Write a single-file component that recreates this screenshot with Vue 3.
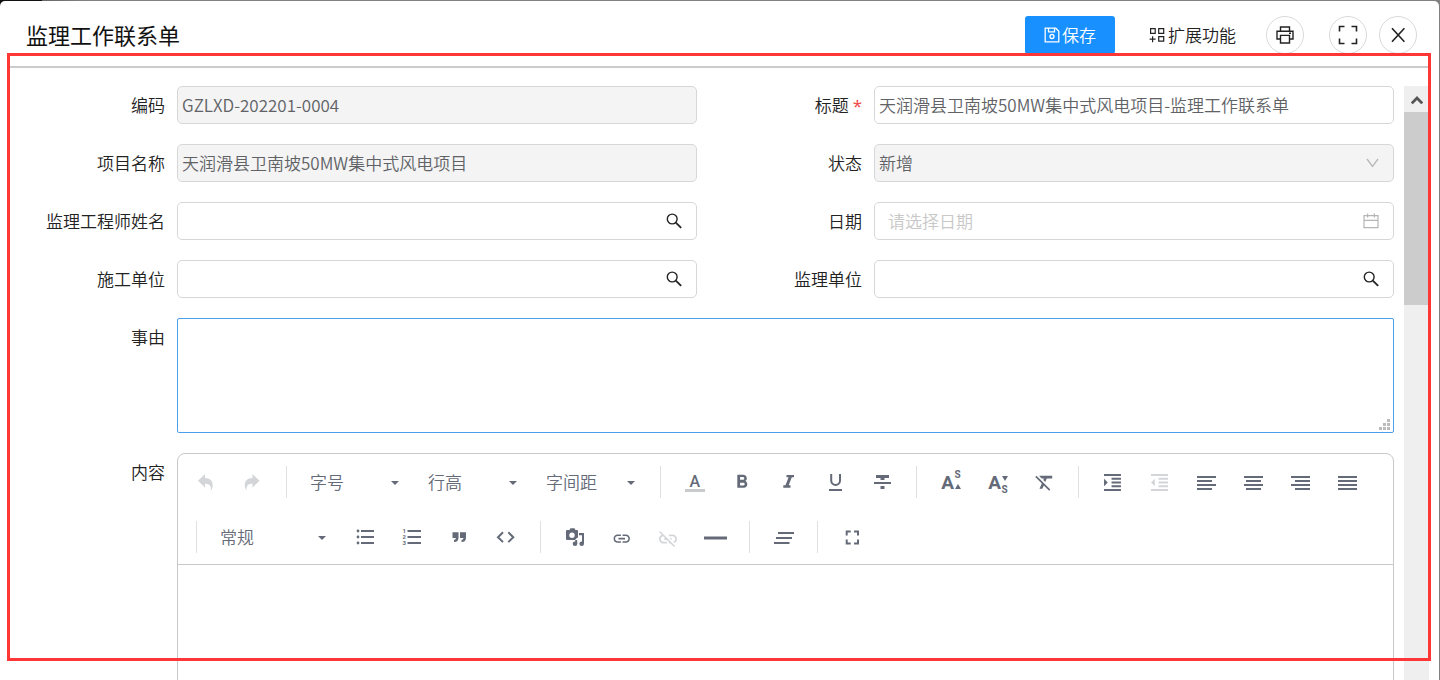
<script setup>
import { ref } from 'vue'

const code = ref('GZLXD-202201-0004')
const title = ref('天润滑县卫南坡50MW集中式风电项目-监理工作联系单')
const project = ref('天润滑县卫南坡50MW集中式风电项目')
const engineer = ref('')
const date = ref('')
const builder = ref('')
const supervisor = ref('')
const reason = ref('')

const alignIcons = [
  { name: '左对齐', d: 'M3 8h19M3 12h15M3 16h19M3 20h15' },
  { name: '居中对齐', d: 'M3 8h19M5 12h15M3 16h19M5 20h15' },
  { name: '右对齐', d: 'M3 8h19M7 12h15M3 16h19M7 20h15' },
  { name: '两端对齐', d: 'M3 8h19M3 12h19M3 16h19M3 20h19' },
]
</script>

<template>
  <div class="page">
    <main class="dialog">
      <header class="header">
        <h1>监理工作联系单</h1>
        <div class="actions">
          <button class="save" type="button">
            <svg width="16" height="16" viewBox="0 0 16 16" fill="none" stroke="currentColor" stroke-width="1.3">
              <path d="M1.2 1.2h10.6l3 3v10.6H1.2zM4.5 1.2v3.6h6V1.2" />
              <circle cx="8" cy="9.5" r="2" />
            </svg>
            保存
          </button>
          <button class="extend" type="button">
            <svg width="17" height="16" viewBox="0 0 17 16" fill="none" stroke="currentColor" stroke-width="1.2">
              <path d="M1.600 1.700h4.600v4.600H1.600zM9.700 1.700h5v4.600h-5zM9.700 9.600h5v4.600h-5zM.6 12.200h6M3.600 9.200v6" />
            </svg>
            扩展功能
          </button>
          <button class="round print" type="button" aria-label="打印">
            <svg width="20" height="20" viewBox="0 0 20 20" fill="none" stroke="currentColor" stroke-width="1.400">
              <path d="M5.500 6V2h9v4M5.500 14H2V6.200h16V14h-3.500M5.500 10.400h9V18h-9zM14 8.300h2" />
            </svg>
          </button>
          <button class="round full" type="button" aria-label="全屏">
            <svg width="20" height="20" viewBox="0 0 20 20" fill="none" stroke="currentColor" stroke-width="1.600">
              <path d="M1.500 6.500v-5h5M13.500 1.500h5v5M18.500 13.500v5h-5M6.500 18.500h-5v-5" />
            </svg>
          </button>
          <button class="round" type="button" aria-label="关闭">
            <svg width="16" height="16" viewBox="0 0 16 16" fill="none" stroke="currentColor" stroke-width="1.600">
              <path d="M2 1.200l12.400 13.600M14.400 1.200L2 14.800" />
            </svg>
          </button>
        </div>
      </header>
      <div class="rule"></div>

      <div class="body">
        <form class="form" @submit.prevent>
          <div class="field">
            <label for="code">编码</label>
            <div class="box off"><input id="code" v-model="code" disabled /></div>
          </div>
          <div class="field">
            <label for="title">标题 <span class="star">*</span></label>
            <div class="box"><input id="title" v-model="title" /></div>
          </div>
          <div class="field">
            <label for="project">项目名称</label>
            <div class="box off"><input id="project" v-model="project" disabled /></div>
          </div>
          <div class="field">
            <label for="status">状态</label>
            <div class="box off">
              <select id="status" disabled><option>新增</option></select>
              <svg class="suffix" width="13" height="10" viewBox="0 0 13 10" fill="none" stroke="#b8b8b8" stroke-width="1.3">
                <path d="M1 1l5.5 7.4L12 1" />
              </svg>
            </div>
          </div>
          <div class="field">
            <label for="engineer">监理工程师姓名</label>
            <div class="box">
              <input id="engineer" v-model="engineer" />
              <button class="find" type="button" aria-label="查找监理工程师">
                <svg width="16" height="16" viewBox="0 0 16 16" fill="none" stroke="currentColor">
                  <circle cx="6.2" cy="6" r="4.9" stroke-width="1.4" /><path d="M9.8 9.6l5.4 5.2" stroke-width="1.8" />
                </svg>
              </button>
            </div>
          </div>
          <div class="field">
            <label for="date">日期</label>
            <div class="box">
              <input id="date" v-model="date" class="date" placeholder="请选择日期" />
              <svg class="suffix" width="16" height="16" viewBox="0 0 16 16" fill="none" stroke="#b5b5b5" stroke-width="1.2">
                <path d="M1 2.6h14v12H1zM1 7.4h14M4.6 .6v4M11.4 .6v4" />
              </svg>
            </div>
          </div>
          <div class="field">
            <label for="builder">施工单位</label>
            <div class="box">
              <input id="builder" v-model="builder" />
              <button class="find" type="button" aria-label="查找施工单位">
                <svg width="16" height="16" viewBox="0 0 16 16" fill="none" stroke="currentColor">
                  <circle cx="6.2" cy="6" r="4.9" stroke-width="1.4" /><path d="M9.8 9.6l5.4 5.2" stroke-width="1.8" />
                </svg>
              </button>
            </div>
          </div>
          <div class="field">
            <label for="supervisor">监理单位</label>
            <div class="box">
              <input id="supervisor" v-model="supervisor" />
              <button class="find" type="button" aria-label="查找监理单位">
                <svg width="16" height="16" viewBox="0 0 16 16" fill="none" stroke="currentColor">
                  <circle cx="6.2" cy="6" r="4.9" stroke-width="1.4" /><path d="M9.8 9.6l5.4 5.2" stroke-width="1.8" />
                </svg>
              </button>
            </div>
          </div>

          <div class="field wide">
            <label for="reason">事由</label>
            <div class="area">
              <textarea id="reason" v-model="reason"></textarea>
              <svg class="grip" width="11" height="11" viewBox="0 0 11 11" fill="#bbb">
                <path d="M8 0h3v3H8zM4 4h3v3H4zM8 4h3v3H8zM0 8h3v3H0zM4 8h3v3H4zM8 8h3v3H8z" />
              </svg>
            </div>
          </div>

          <div class="field wide">
            <label for="content">内容</label>
            <div class="editor">
              <div class="toolbar">
                <div class="tools">
                  <button type="button" class="dim" aria-label="撤销">
                    <svg viewBox="0 0 25 25"><path d="M12 5v4c5 0 8 3 7.700 7.500 0 2-.8 3.700-1.900 5.200.8-4.700-1-7-5.800-7v3.800L5 11.800z" /></svg>
                  </button>
                  <button type="button" class="dim" aria-label="重做">
                    <svg viewBox="0 0 25 25"><path transform="translate(24.500) scale(-1 1)" d="M12 5v4c5 0 8 3 7.700 7.500 0 2-.8 3.700-1.900 5.200.8-4.700-1-7-5.800-7v3.800L5 11.800z" /></svg>
                  </button>
                  <i class="sep"></i>
                  <span class="pick"><select aria-label="字号"><option>字号</option></select></span>
                  <span class="pick"><select aria-label="行高"><option>行高</option></select></span>
                  <span class="pick"><select aria-label="字间距"><option>字间距</option></select></span>
                  <i class="sep"></i>
                  <button type="button" aria-label="文字颜色">
                    <svg viewBox="0 0 25 25"><text x="12.900" y="17.500" font-size="16" text-anchor="middle" class="g medium">A</text><path fill="#c8cacd" d="M3 20h20v3H3z" /></svg>
                  </button>
                  <button type="button" aria-label="粗体">
                    <svg viewBox="0 0 25 25"><path transform="translate(1.800 2) scale(.93)" d="M15.600 10.790c.97-.67 1.650-1.770 1.650-2.790 0-2.260-1.750-4-4-4H7v14h7.040c2.090 0 3.710-1.700 3.710-3.790 0-1.520-.86-2.820-2.150-3.420zM10 6.500h3c.83 0 1.500.67 1.500 1.500s-.67 1.500-1.500 1.500h-3v-3zm3.500 9H10v-3h3.500c.83 0 1.500.67 1.500 1.500s-.67 1.500-1.500 1.500z" /></svg>
                  </button>
                  <button type="button" aria-label="斜体">
                    <svg viewBox="0 0 25 25"><path d="M10.500 6H18v2.300h-2.200l-3.100 8h1.800v2.400H7.300v-2.400h2.200l3.100-8h-2.100z" /></svg>
                  </button>
                  <button type="button" aria-label="下划线">
                    <svg viewBox="0 0 25 25"><path class="line" d="M8.200 5v6.500a4.400 4.400 0 0 0 8.800 0V5" /><path d="M6 20h13v2H6z" /></svg>
                  </button>
                  <button type="button" aria-label="删除线">
                    <svg viewBox="0 0 25 25"><path d="M6 6h13v3h-4.500v2h-4V9H6zM4 13h17v2H4zM10.500 17h4v3h-4z" /></svg>
                  </button>
                  <i class="sep"></i>
                  <button type="button" aria-label="上标">
                    <svg viewBox="0 0 25 25"><text x="9.600" y="20" font-size="19" text-anchor="middle" class="g bold">A</text><text x="19.500" y="9" font-size="10" text-anchor="middle" class="g bold">S</text><path d="M17 20l3-5 3 5z" /></svg>
                  </button>
                  <button type="button" aria-label="下标">
                    <svg viewBox="0 0 25 25"><text x="9.600" y="20" font-size="19" text-anchor="middle" class="g bold">A</text><text x="19.500" y="24" font-size="10" text-anchor="middle" class="g bold">S</text><path d="M17 7h6l-3 5z" /></svg>
                  </button>
                  <button type="button" aria-label="清除格式">
                    <svg viewBox="0 0 25 25"><path transform="translate(1.400 2) scale(.94)" d="M3.270 5L2 6.270l6.970 6.970L6.500 19h3l1.570-3.660L16.730 21 18 19.730 3.550 5.270 3.270 5zM6 5v.18L8.820 8h2.400l-.72 1.680 2.100 2.100L14.210 8H20V5H6z" /></svg>
                  </button>
                  <i class="sep"></i>
                  <button type="button" aria-label="增加缩进">
                    <svg viewBox="0 0 25 25"><path transform="translate(1.200 2.200) scale(.94)" d="M3 21h18v-2H3v2zM3 8v8l4-4-4-4zm8 9h10v-2H11v2zM3 3v2h18V3H3zm8 6h10V7H11v2zm0 4h10v-2H11v2z" /></svg>
                  </button>
                  <button type="button" class="dim" aria-label="减少缩进">
                    <svg viewBox="0 0 25 25"><path transform="translate(1.200 2.200) scale(.94)" d="M11 17h10v-2H11v2zm-8-5l4 4V8l-4 4zm0 9h18v-2H3v2zM3 3v2h18V3H3zm8 6h10V7H11v2zm0 4h10v-2H11v2z" /></svg>
                  </button>
                  <button v-for="a in alignIcons" :key="a.name" type="button" :aria-label="a.name">
                    <svg viewBox="0 0 25 25"><path class="line" :d="a.d" /></svg>
                  </button>
                </div>
                <div class="tools second">
                  <i class="sep"></i>
                  <span class="pick style"><select aria-label="段落样式"><option>常规</option></select></span>
                  <button type="button" aria-label="无序列表">
                    <svg viewBox="0 0 25 25"><path class="line" d="M8 7h13M8 13h13M8 19h13" /><circle cx="5" cy="7" r="1.400" /><circle cx="5" cy="13" r="1.400" /><circle cx="5" cy="19" r="1.400" /></svg>
                  </button>
                  <button type="button" aria-label="有序列表">
                    <svg viewBox="0 0 25 25"><path class="line" d="M7.500 7H21M7.500 13H21M7.500 19H21" /><text x="2.500" y="9" font-size="6" class="g bold">1</text><text x="2.500" y="15" font-size="6" class="g bold">2</text><text x="2.500" y="21" font-size="6" class="g bold">3</text></svg>
                  </button>
                  <button type="button" aria-label="引用">
                    <svg viewBox="0 0 25 25"><path d="M5.500 8.300h6v5.200c0 3-1.500 4.500-4.500 4.500v-2.200c1.300 0 1.900-.6 1.900-1.800H5.500zM13 8.300h6v5.200c0 3-1.500 4.500-4.500 4.500v-2.200c1.300 0 1.900-.6 1.900-1.800H13z" /></svg>
                  </button>
                  <button type="button" aria-label="代码">
                    <svg viewBox="0 0 25 25"><path class="line" d="M9 8.300L4 13.200l5 4.900M14.300 8.300l5 4.900-5 4.900" /></svg>
                  </button>
                  <i class="sep"></i>
                  <button type="button" aria-label="插入媒体">
                    <svg viewBox="0 0 25 25"><path fill-rule="evenodd" d="M5 6h2.500l1-1.700h4l1 1.700H15a1 1 0 0 1 1 1v6.500a5 5 0 0 0-3 2.500H5a1 1 0 0 1-1-1V7a1 1 0 0 1 1-1zm5 2.500a2.700 2.700 0 1 0 0 5.400 2.700 2.700 0 0 0 0-5.400z" /><path d="M17 9h5v10.500h-2V11.300h-3zM13.200 16h2v4h-2z" /><circle cx="13" cy="19.700" r="2.300" /><circle cx="19.700" cy="19.700" r="2.300" /></svg>
                  </button>
                  <button type="button" aria-label="插入链接">
                    <svg viewBox="0 0 25 25"><path transform="translate(2.900 4.800) scale(.82)" d="M3.900 12c0-1.710 1.390-3.100 3.100-3.100h4V7H7c-2.760 0-5 2.240-5 5s2.240 5 5 5h4v-1.900H7c-1.710 0-3.100-1.390-3.100-3.100zM8 13h8v-2H8v2zm9-6h-4v1.900h4c1.710 0 3.100 1.390 3.100 3.100s-1.390 3.100-3.100 3.100h-4V17h4c2.760 0 5-2.240 5-5s-2.240-5-5-5z" /></svg>
                  </button>
                  <button type="button" class="dim" aria-label="取消链接">
                    <svg viewBox="0 0 25 25"><path transform="translate(1.200 4.200) scale(.9)" d="M17 7h-4v1.900h4c1.710 0 3.100 1.390 3.100 3.100 0 1.430-.98 2.630-2.310 2.980l1.460 1.460C20.880 15.610 22 13.950 22 12c0-2.760-2.240-5-5-5zm-1 4h-2.190l2 2H16zM2 4.270l3.110 3.110C3.290 8.120 2 9.910 2 12c0 2.760 2.240 5 5 5h4v-1.900H7c-1.710 0-3.100-1.390-3.100-3.100 0-1.590 1.210-2.900 2.760-3.070L8.730 11H8v2h2.730L13 15.270V17h1.730l4.010 4L20 19.740 3.270 3 2 4.270z" /></svg>
                  </button>
                  <button type="button" aria-label="分割线">
                    <svg viewBox="0 0 25 25"><path d="M1 12.500h23v3H1z" /></svg>
                  </button>
                  <i class="sep"></i>
                  <button type="button" aria-label="清除样式">
                    <svg viewBox="0 0 25 25"><path class="line" d="M7 9h16M5 14h16M3 19h15.500" /></svg>
                  </button>
                  <i class="sep"></i>
                  <button type="button" aria-label="编辑器全屏">
                    <svg viewBox="0 0 25 25"><path class="line" d="M7.700 11.500v-4h4M15 7.500h4v4M19 15.500v4h-4M11.700 19.500h-4v-4" /></svg>
                  </button>
                </div>
              </div>
              <textarea id="content" class="content"></textarea>
            </div>
          </div>
        </form>
        <div class="scrollbar" aria-hidden="true">
          <div class="up">
            <svg width="12" height="10" viewBox="0 0 12 10" fill="none" stroke="#555" stroke-width="2.800"><path d="M.8 8.400L6 3l5.200 5.400" /></svg>
          </div>
          <div class="thumb"></div>
        </div>
      </div>
    </main>
    <div class="marker"></div>
  </div>
</template>

<style>
html,
body {
  margin: 0;
  overflow: hidden;
}
</style>

<style scoped>
* {
  box-sizing: border-box;
}
.page {
  position: relative;
  height: 100vh;
  padding: 1px 1px 0 0;
  background: linear-gradient(90deg, #111 42px, #666 42px, #808080 82px);
  font-family: "Noto Sans CJK SC", sans-serif;
  font-weight: 350;
  font-size: 17px;
  color: #222;
}
.dialog {
  display: flex;
  flex-direction: column;
  height: 100%;
  overflow: hidden;
  background: #fff;
  border-radius: 5px 5px 0 0;
}
button,
input,
select,
textarea {
  font: inherit;
  color: inherit;
  margin: 0;
  padding: 0;
  border: 0;
  background: none;
  outline: 0;
}
svg {
  display: block;
  flex: none;
}
.header {
  display: flex;
  flex: none;
  align-items: center;
  justify-content: space-between;
  height: 65px;
  padding: 2px 22px 0 26px;
}
h1 {
  margin: 0;
  padding-bottom: 2px;
  font-size: 22px;
  line-height: 32px;
  font-weight: 400;
  color: #111;
}
.actions {
  display: flex;
  align-items: center;
}
.save,
.extend {
  display: flex;
  align-items: center;
  justify-content: center;
  gap: 2px;
  height: 38px;
}
.save {
  width: 90px;
  border-radius: 3px;
  background: #1890ff;
  color: #fff;
}
.extend {
  margin: 0 30px 0 34px;
}
.round {
  display: flex;
  align-items: center;
  justify-content: center;
  width: 38px;
  height: 38px;
  border: 1px solid #d9d9d9;
  border-radius: 50%;
}
.print {
  margin-right: 25px;
}
.full {
  margin-right: 12px;
}
.rule {
  flex: none;
  height: 2px;
  margin: 0 11px 18px 10px;
  background: #ccc;
}
.body {
  display: flex;
  flex: 1;
  min-height: 0;
  padding-right: 10px;
}
.form {
  display: grid;
  flex: 1;
  grid-template-columns: 1fr 1fr;
  grid-template-rows: repeat(4, 38px) auto 400px;
  gap: 20px 0;
  min-width: 0;
  margin-right: 10px;
}
.field {
  display: flex;
  min-width: 0;
}
.wide {
  grid-column: 1 / -1;
}
label {
  flex: none;
  width: 177px;
  padding-right: 12px;
  line-height: 38px;
  text-align: right;
  white-space: nowrap;
}
.star {
  font-family: "Noto Sans", sans-serif;
  font-weight: 400;
  line-height: 20px;
  color: #f04a4a;
}
.box {
  display: flex;
  flex: 1;
  align-items: center;
  min-width: 0;
  border: 1px solid #d5d7d8;
  border-radius: 5px;
  color: #606266;
}
.off {
  background: #f4f4f4;
}
.box input,
.box select {
  flex: 1;
  min-width: 0;
  height: 36px;
  padding: 0 4px 1px;
  appearance: none;
  opacity: 1;
}
.box .date {
  padding-left: 13px;
}
.date::placeholder {
  color: #c8c8c8;
}
.suffix {
  margin-right: 14px;
}
.find {
  padding: 4px 14px 4px 4px;
  color: #222;
}
.area {
  position: relative;
  flex: 1;
}
.area textarea {
  display: block;
  width: 100%;
  height: 115px;
  resize: none;
  border: 1px solid #4c9fea;
  border-radius: 2px;
}
.grip {
  position: absolute;
  right: 4px;
  bottom: 3px;
}
.editor {
  display: flex;
  flex: 1;
  flex-direction: column;
  min-width: 0;
  border: 1px solid #c8c8c8;
  border-radius: 8px;
}
.toolbar {
  border-bottom: 1px solid #c8c8c8;
  color: #646a78;
}
.tools {
  display: flex;
  align-items: center;
  height: 55px;
  padding-left: 4px;
}
.second {
  padding-left: 8px;
}
.tools button {
  display: flex;
  align-items: center;
  justify-content: center;
  width: 47px;
  height: 45px;
}
.tools svg {
  width: 25px;
  height: 25px;
  fill: currentColor;
}
.tools .dim {
  color: #d3d5d9;
}
.tools .line {
  fill: none;
  stroke: currentColor;
  stroke-width: 2;
}
.g {
  font-family: Roboto, sans-serif;
}
.medium {
  font-weight: 500;
}
.bold {
  font-weight: 700;
}
.sep {
  width: 1px;
  height: 32px;
  margin: 0 10px;
  background: #dfe0e2;
}
.pick + .sep {
  margin-left: 9px;
}
.pick {
  position: relative;
  width: 118px;
}
.style {
  width: 135px;
}
.pick select {
  width: 100%;
  height: 32px;
  padding-left: 13px;
  appearance: none;
}
.pick::after {
  content: "";
  position: absolute;
  right: 16px;
  top: 15px;
  border: 4px solid transparent;
  border-top-color: #646a78;
  border-bottom: 0;
}
.content {
  flex: 1;
  padding: 12px;
  resize: none;
}
.scrollbar {
  width: 25px;
  background: #efefef;
}
.up {
  display: flex;
  align-items: center;
  justify-content: center;
  height: 26px;
  padding-top: 1px;
}
.thumb {
  height: 193px;
  background: #ccc;
}
.marker {
  position: absolute;
  inset: 53px 9px 19px 7px;
  border: 3px solid #ff3636;
  pointer-events: none;
}
</style>
